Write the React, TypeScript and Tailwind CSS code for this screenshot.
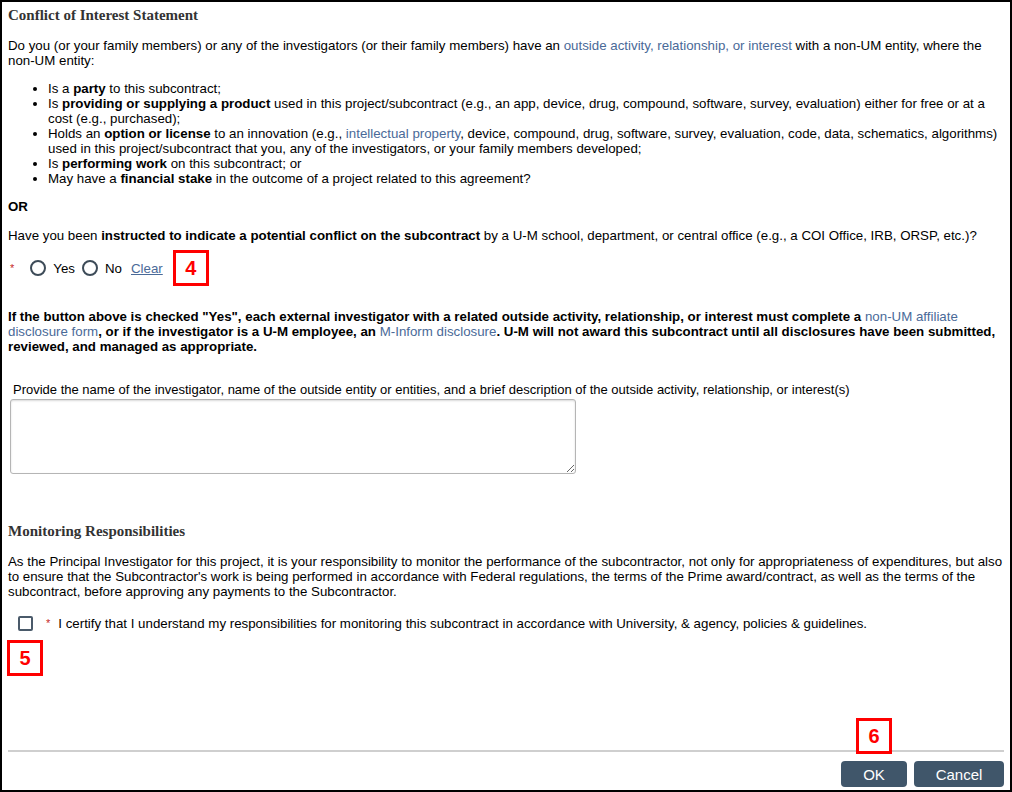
import React from "react";

const linkCls = "text-[#4a6a98]";

const Callout = ({ n, className = "" }: { n: string; className?: string }) => (
  <div
    className={`w-[36px] h-[36px] border-[3px] border-[#ff0000] flex items-center justify-center text-[20px] font-bold text-[#ff0000] bg-white ${className}`}
  >
    {n}
  </div>
);

const Radio = ({ label }: { label: string }) => (
  <label className="flex items-center gap-[7px]">
    <span className="w-[16px] h-[16px] rounded-full border-2 border-[#3d4b58] bg-white" />
    <span>{label}</span>
  </label>
);

export default function App() {
  return (
    <div
      className="relative w-[1012px] h-[792px] border-2 border-black bg-white flex flex-col text-[13.3px] leading-[15px] text-black"
      style={{ fontFamily: '"Liberation Sans", Arial, sans-serif' }}
    >
      <div className="px-[6px] pt-[4px]">
        {/* Conflict of Interest */}
        <h2 className="text-[15px] leading-[18px] font-bold text-[#333]" style={{ fontFamily: '"Liberation Serif", "Times New Roman", serif' }}>
          Conflict of Interest Statement
        </h2>
        <p className="mt-[14px] pr-[6px]">
          Do you (or your family members) or any of the investigators (or their family members) have an{" "}
          <span className={linkCls}>outside activity, relationship, or interest</span> with a non-UM entity, where the non-UM entity:
        </p>
        <ul className="mt-[13px] pl-[40px] list-disc">
          <li className="pr-[8px]">
            Is a <b>party</b> to this subcontract;
          </li>
          <li className="pr-[8px]">
            Is <b>providing or supplying a product</b> used in this project/subcontract (e.g., an app, device, drug, compound, software, survey, evaluation) either for free or at a cost (e.g., purchased);
          </li>
          <li>
            Holds an <b>option or license</b> to an innovation (e.g., <span className={linkCls}>intellectual property</span>, device, compound, drug, software, survey, evaluation, code, data, schematics, algorithms) used in this project/subcontract that you, any of the investigators, or your family members developed;
          </li>
          <li>
            Is <b>performing work</b> on this subcontract; or
          </li>
          <li>
            May have a <b>financial stake</b> in the outcome of a project related to this agreement?
          </li>
        </ul>
        <p className="mt-[13px] font-bold">OR</p>
        <p className="mt-[14px]">
          Have you been <b>instructed to indicate a potential conflict on the subcontract</b> by a U-M school, department, or central office (e.g., a COI Office, IRB, ORSP, etc.)?
        </p>

        <div className="mt-[7px] h-[36px] flex items-center">
          <span className="ml-[2px] text-[#c62828] text-[11px] mr-[16px]">*</span>
          <Radio label="Yes" />
          <div className="ml-[7px]">
            <Radio label="No" />
          </div>
          <span className={`ml-[9px] underline ${linkCls}`}>Clear</span>
          <Callout n="4" className="ml-[10px]" />
        </div>

        <p className="mt-[23px] font-bold">
          If the button above is checked "Yes", each external investigator with a related outside activity, relationship, or interest must complete a{" "}
          <span className={`font-normal ${linkCls}`}>non-UM affiliate disclosure form</span>, or if the investigator is a U-M employee, an{" "}
          <span className={`font-normal ${linkCls}`}>M-Inform disclosure</span>. U-M will not award this subcontract until all disclosures have been submitted, reviewed, and managed as appropriate.
        </p>

        <p className="mt-[28px] pl-[5px] text-[13px]">
          Provide the name of the investigator, name of the outside entity or entities, and a brief description of the outside activity, relationship, or interest(s)
        </p>
        <textarea className="mt-[2px] ml-[2px] block w-[566px] h-[75px] rounded-[3px] border border-[#b5b5b5] shadow-[inset_0_1px_2px_rgba(0,0,0,0.15)] resize-y" />

        {/* Monitoring */}
        <h2 className="mt-[48px] text-[15px] leading-[18px] font-bold text-[#333]" style={{ fontFamily: '"Liberation Serif", "Times New Roman", serif' }}>
          Monitoring Responsibilities
        </h2>
        <p className="mt-[14px]">
          As the Principal Investigator for this project, it is your responsibility to monitor the performance of the subcontractor, not only for appropriateness of expenditures, but also to ensure that the Subcontractor's work is being performed in accordance with Federal regulations, the terms of the Prime award/contract, as well as the terms of the subcontract, before approving any payments to the Subcontractor.
        </p>
        <div className="mt-[16px] h-[16px] flex items-center">
          <span className="ml-[10px] w-[15px] h-[15px] border-2 border-[#4a5a6a] rounded-[2px] bg-white" />
          <span className="ml-[13px] text-[#c62828] text-[11px]">*</span>
          <span className="ml-[8px]">
            I certify that I understand my responsibilities for monitoring this subcontract in accordance with University, &amp; agency, policies &amp; guidelines.
          </span>
        </div>
        <Callout n="5" className="mt-[9px] ml-[-1px]" />
      </div>

      <div className="flex-1" />

      {/* Footer */}
      <div className="mx-[6px] border-t-2 border-[#cfcfcf]" />
      <div className="mt-[9px] mb-[3px] mr-[6px] flex justify-end gap-[7px]">
        <button className="w-[66px] h-[26px] rounded-[4px] bg-[#40566a] text-white text-[15px]">OK</button>
        <button className="w-[90px] h-[26px] rounded-[4px] bg-[#40566a] text-white text-[15px]">Cancel</button>
      </div>

      <Callout n="6" className="absolute left-[854px] top-[716px]" />
    </div>
  );
}
